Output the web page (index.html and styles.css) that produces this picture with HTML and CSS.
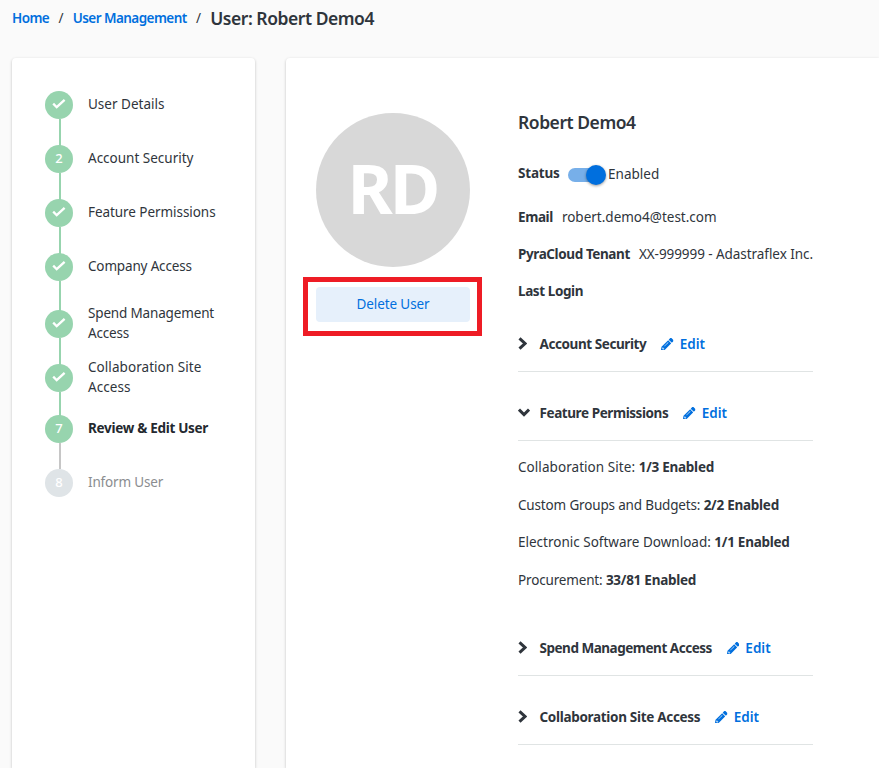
FILE: index.html
```html
<!DOCTYPE html>
<html lang="en">
<head>
<meta charset="utf-8">
<title>User: Robert Demo4</title>
<link rel="stylesheet" href="styles.css">
</head>
<body>
<svg class="defs" width="0" height="0">
  <symbol id="check" viewBox="0 0 14 10"><path d="M1.2 4.6l3.5 3.6L12.6 .9" fill="none" stroke="#fff" stroke-width="2.3"/></symbol>
  <symbol id="right" viewBox="0 0 9 13"><path d="M1.5 1.3L7 6.5l-5.5 5.2" fill="none" stroke="currentColor" stroke-width="3"/></symbol>
  <symbol id="down" viewBox="0 0 12 9"><path d="M1 1.6l5 5 5-5" fill="none" stroke="currentColor" stroke-width="2.9"/></symbol>
  <symbol id="pencil" viewBox="0 0 512 512"><path fill="currentColor" d="M498 142l-46 46c-5 5-13 5-17 0L324 77c-5-5-5-12 0-17l46-46c19-19 49-19 68 0l60 60c19 19 19 49 0 68zM284 100L22 362 .4 484c-3 16 12 30 28 28l122-22 262-262c5-5 5-13 0-17L301 100c-4-5-12-5-17 0zM136 340c-3-4-3-8 0-12l150-150c4-3 9-3 12 0s3 9 0 12L148 340c-4 3-9 3-12 0zm-42 90h36v26l-52 10-24-24 10-52h30v40z"/></symbol>
</svg>

<nav class="crumbs">
  <a href="#">Home</a><span class="sep">/</span><a href="#">User Management</a><span class="sep">/</span><h1>User: Robert Demo4</h1>
</nav>

<main class="page">
  <aside class="card steps-card">
    <ol class="steps">
      <li class="step"><span class="dot"><svg><use href="#check"/></svg></span><span class="label">User Details</span></li>
      <li class="step"><span class="dot">2</span><span class="label">Account Security</span></li>
      <li class="step"><span class="dot"><svg><use href="#check"/></svg></span><span class="label snug">Feature Permissions</span></li>
      <li class="step"><span class="dot"><svg><use href="#check"/></svg></span><span class="label tight">Company Access</span></li>
      <li class="step tall"><span class="dot"><svg><use href="#check"/></svg></span><span class="label tight">Spend Management Access</span></li>
      <li class="step short"><span class="dot"><svg><use href="#check"/></svg></span><span class="label loose">Collaboration Site Access</span></li>
      <li class="step current"><span class="dot">7</span><span class="label">Review &amp; Edit User</span></li>
      <li class="step pending"><span class="dot">8</span><span class="label tight">Inform User</span></li>
    </ol>
  </aside>

  <section class="card profile">
    <div class="identity">
      <div class="avatar">RD</div>
      <div class="delete-wrap">
        <button class="delete" type="button">Delete User</button>
        <span class="highlight"></span>
      </div>
    </div>

    <div class="details">
      <h2>Robert Demo4</h2>
      <div class="field status"><b>Status</b><span class="toggle"><i></i></span><span>Enabled</span></div>
      <div class="field"><b>Email</b><span>robert.demo4@test.com</span></div>
      <div class="field"><b>PyraCloud Tenant</b><span class="snug">XX-999999 - Adastraflex Inc.</span></div>
      <div class="field"><b>Last Login</b></div>

      <div class="sections">
        <div class="section"><svg class="chev"><use href="#right"/></svg><h3>Account Security</h3><a href="#"><svg><use href="#pencil"/></svg>Edit</a></div>
        <div class="section"><svg class="chev open"><use href="#down"/></svg><h3>Feature Permissions</h3><a href="#"><svg><use href="#pencil"/></svg>Edit</a></div>
        <div class="permissions">
          <p class="loose">Collaboration Site: <b>1/3 Enabled</b></p>
          <p class="tight">Custom Groups and Budgets: <b>2/2 Enabled</b></p>
          <p class="even">Electronic Software Download: <b>1/1 Enabled</b></p>
          <p class="tight">Procurement: <b>33/81 Enabled</b></p>
        </div>
        <div class="section"><svg class="chev"><use href="#right"/></svg><h3 class="narrow">Spend Management Access</h3><a href="#"><svg><use href="#pencil"/></svg>Edit</a></div>
        <div class="section"><svg class="chev"><use href="#right"/></svg><h3 class="wide">Collaboration Site Access</h3><a href="#"><svg><use href="#pencil"/></svg>Edit</a></div>
      </div>
    </div>
  </section>
</main>
</body>
</html>
```
FILE: styles.css
```css
* { box-sizing: border-box; }
html, body { height: 100%; overflow: hidden; }
body {
  margin: 0;
  display: flex;
  flex-direction: column;
  background: #fafafa;
  color: #2f353c;
  font: 13.5px/20px "Noto Sans", "Open Sans", sans-serif;
  white-space: nowrap;
}
h1, h2, h3, p, ol { margin: 0; padding: 0; font-weight: 600; }
a { color: #006fde; text-decoration: none; font-weight: 600; }
b { font-weight: 700; letter-spacing: -.4px; }
svg { display: block; flex: none; }
.defs { position: absolute; }
.tight { letter-spacing: -.16px; }
.snug { letter-spacing: -.06px; }
.loose { letter-spacing: .06px; }
.even { letter-spacing: 0; }

.crumbs {
  display: flex;
  align-items: center;
  flex: none;
  height: 58px;
  padding: 0 12px 23px;
}
.crumbs a { letter-spacing: -.56px; }
.crumbs h1 { font-size: 17.5px; letter-spacing: -.46px; }
.sep { width: 23.6px; text-align: center; }

.page { display: flex; flex: 1; min-height: 0; padding-left: 12px; gap: 31px; }
.card { background: #fff; border-radius: 4px 4px 0 0; box-shadow: 0 1px 3px rgba(0, 0, 0, .24); }
.steps-card { flex: none; width: 243px; padding: 20px 33px 0; }

.steps { list-style: none; font-weight: 400; }
.step { position: relative; display: flex; align-items: center; gap: 15px; height: 54px; font-weight: 400; }
.step.tall { height: 60px; }
.step.short { height: 48px; }
.step::after {
  content: "";
  position: absolute;
  left: 14px;
  top: calc(50% + 14px);
  width: 2px;
  height: 32px;
  background: #97d4ae;
}
.step.current::after { background: #c6c6c6; height: 26px; }
.step.pending::after { display: none; }
.dot {
  position: relative;
  z-index: 1;
  display: flex;
  align-items: center;
  justify-content: center;
  flex: none;
  width: 28px;
  height: 28px;
  padding-bottom: 2px;
  border-radius: 50%;
  background: #97d4ae;
  color: #fff;
  font-size: 13px;
  font-weight: 500;
}
.dot svg { width: 14px; height: 10px; }
.label { width: 134px; margin-top: -2px; white-space: normal; }
.current .label { font-weight: 700; letter-spacing: -.3px; color: #24292f; }
.pending .dot { background: #dfe4e7; }
.pending .label { color: #8b8d90; }

.profile { display: flex; flex: 1; gap: 48px; padding: 55px 0 0 30px; border-radius: 4px 0 0 0; }
.identity { flex: none; width: 154px; }
.avatar {
  display: flex;
  align-items: center;
  justify-content: center;
  height: 154px;
  padding: 0 1px 7px 0;
  border-radius: 50%;
  background: #d8d8d8;
  color: #fff;
  font-size: 69px;
  font-weight: 700;
  letter-spacing: -3px;
}
.delete-wrap { position: relative; margin-top: 20px; }
.delete {
  display: block;
  width: 100%;
  height: 35px;
  padding: 0 0 1px;
  border: 0;
  border-radius: 4px;
  background: #e6f0fb;
  color: #006fde;
  font: inherit;
  letter-spacing: -.1px;
}
.highlight { position: absolute; inset: -10px -12px -14px -13px; border: 5px solid #ee1c25; }

.details { width: 295px; margin-top: -1px; }
h2 { height: 40px; font-size: 17.5px; letter-spacing: -.46px; }
.field { display: flex; align-items: center; gap: 9px; height: 37px; }
.status { height: 44px; margin-bottom: 2px; gap: 0; }
.status b { margin: -2px 8px 0 0; letter-spacing: -.2px; }
.toggle { position: relative; width: 38px; height: 14px; margin: 1px 2.5px 0 0; }
.toggle::before { content: ""; position: absolute; inset: 0 2px 0 0; border-radius: 7px; background: #77afe9; }
.toggle i { position: absolute; right: 0; top: -3px; width: 20px; height: 20px; border-radius: 50%; background: #006fde; box-shadow: 0 1px 3px rgba(0, 0, 0, .4); }

.sections { padding-top: 8px; }
.section { display: flex; align-items: center; height: 55px; margin-bottom: 14px; border-bottom: 1px solid #e0e4e4; }
.chev { width: 9px; height: 13px; margin: -1px 12.5px 0 0; }
.chev.open { width: 12px; height: 9px; margin-right: 9.5px; }
h3 { font-size: inherit; font-weight: 700; letter-spacing: -.42px; }
h3.wide { letter-spacing: -.31px; }
h3.narrow { letter-spacing: -.48px; }
.section a { display: flex; align-items: center; gap: 6px; margin-left: 15px; }
.section a svg { width: 12.5px; height: 12.5px; }
.permissions { height: 166px; padding-top: 2px; }
.permissions p { height: 37.6px; line-height: 20px; font-weight: 400; }
.permissions b { letter-spacing: -.26px; }
```
